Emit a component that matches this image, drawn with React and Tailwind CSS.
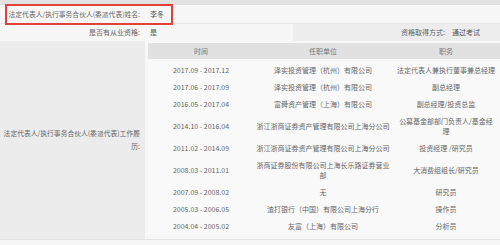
export default function App() {
  const rows = [
    { time: "2017.09 - 2017.12", unit: "泽实投资管理（杭州）有限公司", title: "法定代表人兼执行董事兼总经理" },
    { time: "2017.06 - 2017.09", unit: "泽实投资管理（杭州）有限公司", title: "副总经理" },
    { time: "2016.05 - 2017.04", unit: "富舜资产管理（上海）有限公司", title: "副总经理/投资总监" },
    { time: "2014.10 - 2016.04", unit: "浙江浙商证券资产管理有限公司上海分公司", title: ["公募基金部部门负责人/基金经", "理"] },
    { time: "2011.02 - 2014.09", unit: "浙江浙商证券资产管理有限公司上海分公司", title: "投资经理 /研究员" },
    { time: "2008.03 - 2011.01", unit: ["浙商证券股份有限公司上海长乐路证券营业", "部"], title: "大消费组组长/研究员" },
    { time: "2007.09 - 2008.02", unit: "无", title: "研究员" },
    { time: "2005.03 - 2006.05", unit: "渣打银行（中国）有限公司上海分行", title: "操作员" },
    { time: "2004.04 - 2005.02", unit: "友富（上海）有限公司", title: "分析员" },
  ];

  const lines = (v) =>
    Array.isArray(v) ? v.map((s, i) => <div key={i}>{s}</div>) : v;

  return (
    <div
      className="relative w-[500px] h-[245px] overflow-hidden bg-[#f7f7f7] text-[7px] text-[#666]"
      style={{ fontFamily: '"Noto Sans CJK SC", "Noto Sans", sans-serif' }}
    >
      {/* top strip */}
      <div className="h-[5px] bg-[#e2e2e2]" />

      {/* name row */}
      <div className="flex h-[19px] items-center border-b border-[#e6e6e6]">
        <div className="w-[145px] pr-[5px] text-right text-[6.8px] whitespace-nowrap">法定代表人/执行事务合伙人(委派代表)姓名:</div>
        <div className="pl-[5px] text-[#555]">李冬</div>
      </div>

      {/* qualification row */}
      <div className="flex h-[17px] items-stretch">
        <div className="flex w-[145px] items-center justify-end pr-[5px]">是否有从业资格:</div>
        <div className="flex w-[148px] items-center pl-[5px] text-[#555]">是</div>
        <div className="flex flex-1 items-center bg-[#ededed]">
          <div className="w-[154px] pr-[2px] text-right">资格取得方式:</div>
          <div className="pl-[5px] text-[#555]">通过考试</div>
        </div>
      </div>

      {/* work history */}
      <div className="flex border-b border-[#e2e2e2]">
        <div className="flex w-[145px] items-center justify-end bg-[#ececec] pr-[5px] text-right text-[6.8px] leading-[13px]">
          <div>
            <div className="whitespace-nowrap">法定代表人/执行事务合伙人(委派代表)工作履</div>
            <div>历:</div>
          </div>
        </div>
        <div className="flex-1 pl-[3px] pt-[2px] pb-[5px]">
          <div className="flex h-[16px] items-center bg-[#e1e1e1] text-[#777]">
            <div className="w-[106px] text-center">时间</div>
            <div className="w-[138px] text-center">任职单位</div>
            <div className="flex-1 text-center">职务</div>
          </div>
          <div className="mt-[2px] bg-[#f9f9f9] leading-[10px]">
            {rows.map((r, i) => (
              <div key={i} className="flex items-center py-[3.5px] text-center whitespace-nowrap">
                <div className="w-[106px]">{r.time}</div>
                <div className="w-[138px] px-[2px]">{lines(r.unit)}</div>
                <div className="flex-1 px-[4px]">{lines(r.title)}</div>
              </div>
            ))}
          </div>
        </div>
      </div>

      {/* highlight annotation */}
      <div className="absolute left-[5px] top-[4px] h-[21px] w-[168px] border-2 border-[#e2403a]" />
    </div>
  );
}
